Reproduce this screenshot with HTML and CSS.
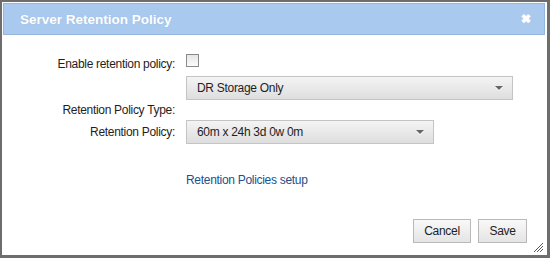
FILE: index.html
```html
<!DOCTYPE html>
<html lang="en">
<head>
<meta charset="UTF-8" />
<title>Server Retention Policy</title>
<link rel="stylesheet" href="styles.css">
</head>
<body>

<div class="dialog">
  <header class="dialog-head">
    <h1>Server Retention Policy</h1>
    <span class="close">&#10006;</span>
  </header>

  <div class="dialog-body">
    <div class="form">
      <label class="lbl row-enable">Enable retention policy:</label>
      <span class="check row-enable"></span>

      <div class="select wide row-type">
        <span>DR Storage Only</span>
        <i class="arrow"></i>
      </div>
      <label class="lbl row-type type-lbl">Retention Policy Type:</label>

      <label class="lbl row-policy">Retention Policy:</label>
      <div class="select narrow row-policy">
        <span>60m x 24h 3d 0w 0m</span>
        <i class="arrow"></i>
      </div>

      <a class="setup-link row-link" href="#">Retention Policies setup</a>
    </div>

    <div class="actions">
      <button type="button" class="btn cancel">Cancel</button>
      <button type="button" class="btn save">Save</button>
    </div>
  </div>

  <svg class="grip" width="11" height="11" viewBox="0 0 11 11">
    <path d="M1 10 L10 1 M4 10 L10 4 M7 10 L10 7" stroke="#555" stroke-width="1" fill="none"/>
  </svg>
</div>

</body>
</html>
```

FILE: styles.css
```css
:root {
  --frame: #6d6d6d;
  --head-bg: #a9c9ee;
  --head-border: #95b6dc;
  --text: #1e1e1e;
  --link: #20508e;
  --ctrl-border: #c4c4c4;
}
* {
  box-sizing: border-box;
}
body {
  margin: 0;
  font-family: "Liberation Sans", Arial, sans-serif;
  font-size: 12px;
  letter-spacing: -0.3px;
  color: var(--text);
  background: #fff;
}
.dialog {
  position: relative;
  width: 550px;
  height: 258px;
  border-style: solid;
  border-color: var(--frame);
  border-width: 2px 3px 3px 2px;
  padding: 1px 2px 0 1px;
  background: #fff;
  display: flex;
  flex-direction: column;
}
.dialog-head {
  height: 32px;
  background: var(--head-bg);
  border: 1px solid var(--head-border);
  display: flex;
  align-items: center;
  justify-content: space-between;
  padding: 0 13px 0 16px;
}
.dialog-head h1 {
  margin: 0;
  font-size: 13.5px;
  font-weight: bold;
  letter-spacing: 0;
  color: #fff;
  text-shadow: 0 0 1px rgba(120,150,190,0.4);
}
.close {
  color: #fff;
  font-size: 12px;
  font-weight: bold;
  line-height: 1;
  text-shadow: 0 0 1px #fff;
}
.dialog-body {
  flex: 1;
  display: flex;
  flex-direction: column;
  justify-content: space-between;
  padding: 16px 17px 12px 0;
}
.form {
  display: grid;
  grid-template-columns: 172px 1fr;
  column-gap: 11px;
  grid-template-rows: 26px 42px 26px 44px;
  align-items: center;
}
.lbl {
  grid-column: 1;
  text-align: right;
}
.row-enable { grid-row: 1; }
.row-type { grid-row: 2; }
.row-policy { grid-row: 3; }
.row-link { grid-row: 4; align-self: end; }
.type-lbl {
  align-self: end;
  padding-bottom: 2px;
}
.check {
  grid-column: 2;
  width: 13px;
  height: 13px;
  border: 1px solid #8a8a8a;
  background: linear-gradient(#e6e6e6, #fbfbfb);
  margin-bottom: 8px;
}
.select {
  grid-column: 2;
  height: 24px;
  border: 1px solid var(--ctrl-border);
  background: linear-gradient(#f4f4f4, #e9e9e9 50%, #dedede);
  display: flex;
  align-items: center;
  justify-content: space-between;
  padding: 0 9px 0 10px;
}
.row-type.select {
  align-self: start;
  margin-top: -1px;
}
.select.wide { width: 327px; }
.select.narrow { width: 248px; }
.arrow {
  width: 0;
  height: 0;
  border-left: 4px solid transparent;
  border-right: 4px solid transparent;
  border-top: 4px solid #666;
  filter: drop-shadow(0 1px 0 #fff);
}
.setup-link {
  grid-column: 2;
  color: var(--link);
  text-decoration: none;
  padding-bottom: 2px;
}
.actions {
  display: flex;
  justify-content: flex-end;
  gap: 7px;
  padding-right: 1px;
}
.btn {
  height: 24px;
  font-family: inherit;
  font-size: 12px;
  letter-spacing: -0.3px;
  color: #222;
  border: 1px solid #b9b9b9;
  background: linear-gradient(#f9f9f9, #e4e4e4);
  border-radius: 0;
  padding: 0;
}
.cancel { width: 58px; }
.save { width: 49px; }
.grip {
  position: absolute;
  right: 3px;
  bottom: 2px;
}
```
